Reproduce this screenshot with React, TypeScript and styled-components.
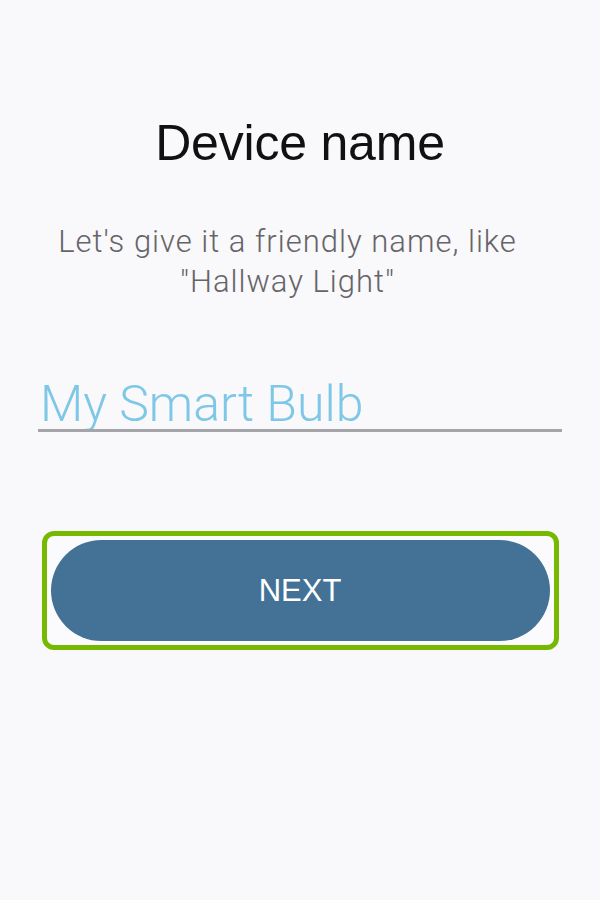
import React from "react";
import styled, { createGlobalStyle } from "styled-components";

const GlobalStyle = createGlobalStyle`
  html, body {
    margin: 0;
    padding: 0;
    background: #f9f8fb;
  }
  * {
    box-sizing: border-box;
  }
`;

const Screen = styled.div`
  width: 600px;
  height: 900px;
  background: #f9f8fb;
  display: flex;
  flex-direction: column;
  align-items: center;
  padding: 113px 38px 0 38px;
  font-family: "Liberation Sans", Arial, sans-serif;
`;

const Title = styled.h1`
  margin: 0;
  font-weight: 400;
  font-size: 50px;
  line-height: 60px;
  color: #111;
  letter-spacing: -0.2px;
`;

const Hint = styled.p`
  margin: 49px 0 0 0;
  padding-right: 25px;
  font-family: Roboto, "Liberation Sans", sans-serif;
  font-weight: 300;
  font-size: 31px;
  line-height: 40px;
  letter-spacing: 1px;
  color: #666468;
  text-align: center;
`;

const NameField = styled.input`
  margin-top: 67px;
  width: 100%;
  height: 63px;
  border: none;
  border-bottom: 3px solid #a5a4a8;
  background: transparent;
  outline: none;
  padding: 10px 0 0 2px;
  font-family: Roboto, "Liberation Sans", sans-serif;
  font-weight: 300;
  font-size: 50px;
  color: #7fc7e7;

  &::placeholder {
    color: #7fc7e7;
    opacity: 1;
  }
`;

const Highlight = styled.div`
  margin-top: 99px;
  width: 517px;
  padding: 4px;
  border: 5px solid #76b900;
  border-radius: 12px;
  background: #fbfbfd;
`;

const NextButton = styled.button`
  display: block;
  width: 100%;
  height: 101px;
  border: none;
  border-radius: 51px;
  background: #437296;
  color: #fff;
  font-family: "Liberation Sans", Arial, sans-serif;
  font-size: 31px;
  cursor: pointer;
`;

export default function App() {
  return (
    <>
      <GlobalStyle />
      <Screen>
        <Title>Device name</Title>
        <Hint>
          Let's give it a friendly name, like
          <br />
          "Hallway Light"
        </Hint>
        <NameField placeholder="My Smart Bulb" />
        <Highlight>
          <NextButton>NEXT</NextButton>
        </Highlight>
      </Screen>
    </>
  );
}
